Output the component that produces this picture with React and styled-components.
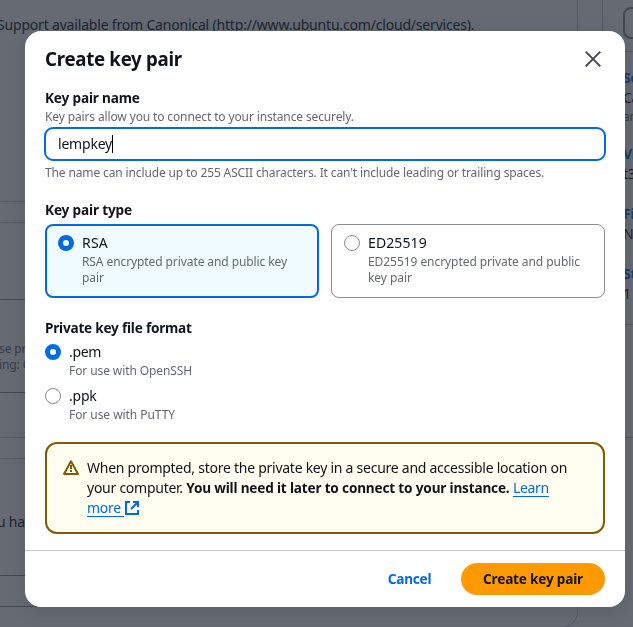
import React from "react";
import styled, { createGlobalStyle, css } from "styled-components";

const c = {
  text: "#0f141a",
  secondary: "#656871",
  heading: "#424650",
  blue: "#006ce0",
  border: "#8c8c94",
  divider: "#c6c6cd",
  warning: "#855900",
};

const GlobalStyle = createGlobalStyle`
  *, *::before, *::after { box-sizing: border-box; }
  html, body { height: 100%; overflow: hidden; }
  body {
    margin: 0;
    background: #fff;
    color: ${c.text};
    font: 400 14px/20px "Noto Sans", "Open Sans", sans-serif;
  }
`;

/* ---------- page behind the dialog ---------- */

const Page = styled.div`
  display: grid;
  grid-template-columns: 578px 1fr;
  column-gap: 24px;
  height: 627px;
  overflow: hidden;
  white-space: nowrap;
`;

const Column = styled.div`
  display: flex;
  flex-direction: column;
`;

const Panel = styled.section`
  height: ${(p) => p.$h}px;
  padding-top: ${(p) => p.$pad || 0}px;
  margin-bottom: 20px;
  border: solid ${c.divider};
  border-width: ${(p) => (p.$first ? "0 1px 1px 0" : "1px 1px 1px 0")};
  border-radius: ${(p) => (p.$first ? "0 0 16px 0" : "0 16px 16px 0")};
`;

const Rule = styled.div`
  width: 100px;
  border-top: 1px solid ${c.border};
  margin-bottom: ${(p) => p.$after || 0}px;
`;

const PanelText = styled.div`
  color: ${(p) => (p.$small ? c.secondary : c.text)};
  font-size: ${(p) => (p.$small ? 12 : 14)}px;
  line-height: ${(p) => (p.$small ? 16 : 20)}px;
  letter-spacing: ${(p) => p.$ls ?? -0.1}px;
  margin-left: ${(p) => p.$shift || 0}px;
  margin-bottom: ${(p) => p.$after || 0}px;
`;

const Summary = styled.aside`
  height: 325px;
  border: solid ${c.divider};
  border-width: 0 0 1px 1px;
  overflow: hidden;
`;

const SummaryEnd = styled.div`
  height: 113px;
  border-bottom: 1px solid ${c.divider};
`;

const SummaryTop = styled.div`
  height: 52px;
  padding: 7px 0 0 20px;
  border-bottom: 1px solid ${c.divider};
`;

const GhostButton = styled.div`
  width: 60px;
  height: 32px;
  border: 2px solid ${c.border};
  border-radius: 8px;
`;

const SummaryItem = styled.div`
  padding-left: 20px;
  margin-top: ${(p) => p.$before}px;
  letter-spacing: -0.25px;
`;

const SummaryLabel = styled.div`
  color: ${c.blue};
  font-weight: 700;
`;

const SummaryNote = styled.div`
  color: ${c.secondary};
  font-size: 12px;
  line-height: 18px;
  height: 16px;
`;

/* ---------- dialog ---------- */

const Overlay = styled.div`
  position: fixed;
  inset: 0;
  display: flex;
  align-items: flex-start;
  padding: 31px 0 0 25px;
  background: rgba(35, 43, 55, 0.7);
`;

const Dialog = styled.div`
  width: 600px;
  background: #fff;
  border-radius: 16px;
  box-shadow: 0 4px 20px 1px rgba(0, 7, 22, 0.1);
`;

const Header = styled.header`
  display: flex;
  justify-content: space-between;
  padding: 16px 20px 17px;
  height: 57px;
`;

const Title = styled.h2`
  margin: 0;
  font-size: 18.7px;
  line-height: 24px;
  font-weight: 700;
  letter-spacing: -0.3px;
`;

const CloseButton = styled.button`
  display: flex;
  align-items: center;
  justify-content: center;
  width: 24px;
  height: 24px;
  margin: 0;
  padding: 0;
  border: 0;
  background: none;
  color: ${c.heading};
`;

const Body = styled.div`
  display: flex;
  flex-direction: column;
  gap: 20px;
  padding: 0 20px 16px;
`;

const Field = styled.div`
  display: flex;
  flex-direction: column;
`;

const Label = styled.div`
  font-size: 13.6px;
  font-weight: 700;
  letter-spacing: ${(p) => p.$ls}px;
  margin-bottom: ${(p) => p.$after || 0}px;
`;

const Hint = styled.div`
  color: ${c.secondary};
  font-size: 12px;
  line-height: 16px;
  padding-top: 1px;
  margin-bottom: -1px;
  letter-spacing: ${(p) => p.$ls}px;
`;

const NameInput = styled.div`
  display: flex;
  align-items: center;
  height: 34px;
  margin: 3px -1px;
  padding-left: 12px;
  border: 2px solid ${c.blue};
  border-radius: 9px;
  letter-spacing: -0.2px;
`;

const Caret = styled.span`
  width: 1px;
  height: 18px;
  background: #000;
`;

const Tiles = styled.div`
  display: grid;
  grid-template-columns: 1fr 1fr;
  gap: 12px;
`;

const Tile = styled.div`
  height: 74px;
  border-radius: 8px;
  ${(p) =>
    p.$selected
      ? css`
          border: 2px solid ${c.blue};
          background: #f0fbff;
          padding: 7px 11px;
        `
      : css`
          border: 1px solid ${c.border};
          padding: 8px 12px;
        `}
`;

const Option = styled.div`
  display: flex;
  gap: 8px;
`;

const Options = styled.div`
  display: flex;
  flex-direction: column;
  gap: 8px;
`;

const OptionContent = styled.div`
  display: flex;
  flex-direction: column;
`;

const Radio = styled.span`
  flex: none;
  width: 16px;
  height: 16px;
  margin-top: 2px;
  border-radius: 50%;
  background: #fff;
  border: ${(p) => (p.$on ? `5px solid ${c.blue}` : `1px solid ${c.border}`)};
`;

const OptionName = styled.div`
  letter-spacing: ${(p) => p.$ls}px;
`;

const Alert = styled.div`
  display: flex;
  gap: 8px;
  padding: 14px 16px;
  border: 2px solid ${c.warning};
  border-radius: 12px;
  background: #fffef0;
`;

const AlertIcon = styled.svg`
  flex: none;
  margin-top: 2px;
`;

const AlertText = styled.div`
  letter-spacing: -0.258px;
  white-space: nowrap;
`;

const Strong = styled.b`
  font-size: 13.6px;
  letter-spacing: -0.18px;
`;

const Link = styled.a`
  color: ${c.blue};
  letter-spacing: -0.3px;
  text-decoration: underline 1px;
  text-underline-offset: 3px;
  white-space: pre;
`;

const ExternalIcon = styled.svg`
  vertical-align: -2px;
  margin-left: 1px;
`;

const Footer = styled.footer`
  display: flex;
  justify-content: flex-end;
  gap: 8px;
  padding: 12px 20px;
  border-top: 1px solid ${c.divider};
`;

const Button = styled.button`
  height: 32px;
  padding: 0;
  width: ${(p) => (p.$primary ? 144 : 87)}px;
  border: 0;
  border-radius: 16px;
  background: ${(p) => (p.$primary ? "#ff9900" : "transparent")};
  color: ${(p) => (p.$primary ? c.text : c.blue)};
  font: 700 13.6px/20px "Noto Sans", "Open Sans", sans-serif;
  letter-spacing: -0.2px;
`;

function KeyOption({ name, note, on, ls, noteLs }) {
  return (
    <Option>
      <Radio $on={on} />
      <OptionContent>
        <OptionName $ls={ls}>{name}</OptionName>
        <Hint $ls={noteLs}>{note}</Hint>
      </OptionContent>
    </Option>
  );
}

function Background() {
  return (
    <Page>
      <Column>
        <Panel $h={202} $pad={15} $first>
          <PanelText $shift={-3} $ls={-0.185}>
            Support available from Canonical (http://www.ubuntu.com/cloud/services).
          </PanelText>
        </Panel>
        <Panel $h={216} $pad={76}>
          <Rule $after={41} />
          <PanelText $small $shift={-1}>se pr</PanelText>
          <PanelText $small $after={19} $shift={-1}>ing: C</PanelText>
          <Rule />
        </Panel>
        <Panel $h={170} $pad={53}>
          <PanelText $shift={-3} $ls={-0.25} $after={43}>u hav</PanelText>
          <Rule $after={30} />
          <Rule />
        </Panel>
      </Column>
      <Column>
        <Summary>
          <SummaryTop>
            <GhostButton />
          </SummaryTop>
          <SummaryItem $before={16}>
            <SummaryLabel>So</SummaryLabel>
            <div>Ca</div>
            <SummaryNote>am</SummaryNote>
          </SummaryItem>
          <SummaryItem $before={20}>
            <SummaryLabel>Vi</SummaryLabel>
            <div>t3</div>
          </SummaryItem>
          <SummaryItem $before={20}>
            <SummaryLabel>Fi</SummaryLabel>
            <div>N</div>
          </SummaryItem>
          <SummaryItem $before={20}>
            <SummaryLabel>St</SummaryLabel>
            <div>1</div>
          </SummaryItem>
        </Summary>
        <SummaryEnd />
      </Column>
    </Page>
  );
}

export default function App() {
  return (
    <>
      <GlobalStyle />
      <Background />
      <Overlay>
        <Dialog role="dialog" aria-label="Create key pair">
          <Header>
            <Title>Create key pair</Title>
            <CloseButton aria-label="Close">
              <svg width="16" height="16" viewBox="0 0 16 16" fill="none" stroke="currentColor" strokeWidth="1.9">
                <path d="M.7.7l14.6 14.6M15.3.7L.7 15.3" />
              </svg>
            </CloseButton>
          </Header>
          <Body>
            <Field>
              <Label $ls={-0.17}>Key pair name</Label>
              <Hint $ls={-0.13}>Key pairs allow you to connect to your instance securely.</Hint>
              <NameInput>
                lempkey
                <Caret />
              </NameInput>
              <Hint $ls={-0.13}>
                The name can include up to 255 ASCII characters. It can't include leading or trailing spaces.
              </Hint>
            </Field>
            <Field>
              <Label $ls={-0.15} $after={4}>Key pair type</Label>
              <Tiles>
                <Tile $selected>
                  <KeyOption on name="RSA" ls={0.2} note="RSA encrypted private and public key pair" noteLs={-0.09} />
                </Tile>
                <Tile>
                  <KeyOption name="ED25519" ls={0.1} note="ED25519 encrypted private and public key pair" noteLs={-0.06} />
                </Tile>
              </Tiles>
            </Field>
            <Field>
              <Label $ls={-0.22} $after={4}>Private key file format</Label>
              <Options>
                <KeyOption on name=".pem" ls={-0.33} note="For use with OpenSSH" noteLs={-0.1} />
                <KeyOption name=".ppk" ls={-0.2} note="For use with PuTTY" noteLs={-0.06} />
              </Options>
            </Field>
            <Alert>
              <AlertIcon width="16" height="16" viewBox="0 0 16 16" fill="none" stroke={c.warning} strokeWidth="2">
                <path d="M8 1.2L15 14H1L8 1.2z" strokeLinejoin="round" />
                <path d="M8 5v4M8 10v2" />
              </AlertIcon>
              <AlertText>
                When prompted, store the private key in a secure and accessible location on
                <br />
                your computer. <Strong>You will need it later to connect to your instance.</Strong>{" "}
                <Link>Learn</Link>
                <br />
                <Link>more </Link>
                <ExternalIcon width="14" height="14" viewBox="0 0 14 14" fill="none" stroke={c.blue} strokeWidth="2">
                  <path d="M5 1H1v12h12V9M8 1h5v5M13 1L6 8" />
                </ExternalIcon>
              </AlertText>
            </Alert>
          </Body>
          <Footer>
            <Button>Cancel</Button>
            <Button $primary>Create key pair</Button>
          </Footer>
        </Dialog>
      </Overlay>
    </>
  );
}
